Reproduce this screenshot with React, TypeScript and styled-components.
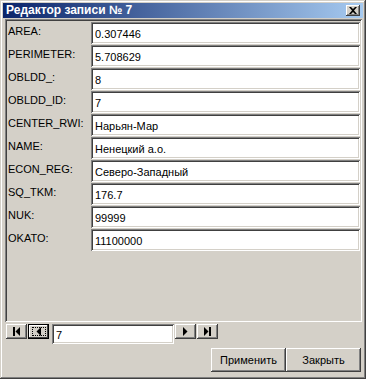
import React from "react";
import styled, { createGlobalStyle } from "styled-components";

const Global = createGlobalStyle`
  html, body { margin: 0; padding: 0; background: #d4d0c8; }
  * { box-sizing: border-box; }
`;

const font = `"Liberation Sans", Arial, sans-serif`;

const Window = styled.div`
  width: 366px;
  height: 379px;
  padding: 3px;
  background: #d4d0c8;
  display: flex;
  flex-direction: column;
  font-family: ${font};
  font-size: 11px;
  color: #000;
  box-shadow: inset -1px -1px #404040, inset 1px 1px #d4d0c8,
    inset -2px -2px #808080, inset 2px 2px #ffffff;
`;

const TitleBar = styled.div`
  height: 15px;
  flex: none;
  display: flex;
  align-items: center;
  padding-left: 3px;
  background: linear-gradient(to right, #0a246a, #a6caf0);
`;

const TitleText = styled.div`
  flex: 1;
  color: #fff;
  font-weight: bold;
  font-size: 12px;
  line-height: 15px;
  white-space: nowrap;
`;

const CloseButton = styled.div`
  width: 14px;
  height: 11px;
  margin-right: 3px;
  display: flex;
  align-items: center;
  justify-content: center;
  background: #d4d0c8;
  box-shadow: inset -1px -1px #404040, inset 1px 1px #ffffff,
    inset -2px -2px #808080;
`;

const Body = styled.div`
  flex: 1;
  display: flex;
  flex-direction: column;
  padding: 1px 1px 3px 2px;
`;

const Panel = styled.div`
  height: 303px;
  flex: none;
  padding: 3px 2px 2px 3px;
  display: flex;
  flex-direction: column;
  gap: 1px;
  box-shadow: inset 1px 1px #808080, inset -1px -1px #ffffff,
    inset 2px 2px #404040, inset -2px -2px #d4d0c8;
`;

const Row = styled.div`
  display: grid;
  grid-template-columns: 83px 1fr;
  height: 22px;
`;

const Label = styled.div`
  padding-top: 3px;
  line-height: 13px;
  white-space: nowrap;
`;

const Field = styled.input`
  height: 22px;
  width: 100%;
  border: none;
  outline: none;
  margin: 0;
  padding: 2px 0 0 4px;
  font-family: ${font};
  font-size: 11px;
  color: #000;
  background: #fff;
  box-shadow: inset 1px 1px #808080, inset -1px -1px #ffffff,
    inset 2px 2px #404040, inset -2px -2px #d4d0c8;
`;

const NavRow = styled.div`
  height: 23px;
  flex: none;
  display: flex;
  align-items: flex-start;
  gap: 1px;
  padding: 1px 0 0 1px;
`;

const NavButton = styled.div<{ $focused?: boolean }>`
  width: 21px;
  height: 15px;
  margin-top: 1px;
  display: flex;
  align-items: center;
  justify-content: center;
  position: relative;
  background: #d4d0c8;
  box-shadow: ${(p) =>
    p.$focused
      ? "inset 0 0 0 1px #000, inset -2px -2px #404040, inset 2px 2px #ffffff"
      : "inset -1px -1px #404040, inset 1px 1px #ffffff, inset -2px -2px #808080, inset 2px 2px #d4d0c8"};
`;

const FocusRect = styled.div`
  position: absolute;
  left: 4px;
  top: 3px;
  right: 3px;
  bottom: 3px;
  border: 1px dotted #000;
`;

const NavField = styled(Field)`
  width: 122px;
  height: 20px;
  margin: 1px 0 0 2px;
  padding-top: 1px;
`;

const ButtonRow = styled.div`
  display: flex;
  justify-content: flex-end;
  margin-top: 3px;
  padding-right: 1px;
`;

const Button = styled.div`
  width: 75px;
  height: 24px;
  display: flex;
  align-items: center;
  justify-content: center;
  font-size: 11px;
  background: #d4d0c8;
  box-shadow: inset -1px -1px #404040, inset 1px 1px #ffffff,
    inset -2px -2px #808080, inset 2px 2px #d4d0c8;
`;

const fields: [string, string][] = [
  ["AREA:", "0.307446"],
  ["PERIMETER:", "5.708629"],
  ["OBLDD_:", "8"],
  ["OBLDD_ID:", "7"],
  ["CENTER_RWI:", "Нарьян-Мар"],
  ["NAME:", "Ненецкий а.о."],
  ["ECON_REG:", "Северо-Западный"],
  ["SQ_TKM:", "176.7"],
  ["NUK:", "99999"],
  ["OKATO:", "11100000"],
];

const First = () => (
  <svg width="7" height="9" viewBox="0 0 7 9">
    <rect x="0" y="0" width="2" height="9" fill="#000" />
    <polygon points="7,0 7,9 2.5,4.5" fill="#000" />
  </svg>
);
const Prev = () => (
  <svg width="5" height="9" viewBox="0 0 5 9">
    <polygon points="5,0 5,9 0.5,4.5" fill="#000" />
  </svg>
);
const Next = () => (
  <svg width="5" height="9" viewBox="0 0 5 9">
    <polygon points="0,0 0,9 4.5,4.5" fill="#000" />
  </svg>
);
const Last = () => (
  <svg width="7" height="9" viewBox="0 0 7 9">
    <polygon points="0,0 0,9 4.5,4.5" fill="#000" />
    <rect x="5" y="0" width="2" height="9" fill="#000" />
  </svg>
);

export default function App() {
  return (
    <>
      <Global />
      <Window>
        <TitleBar>
          <TitleText>Редактор записи № 7</TitleText>
          <CloseButton>
            <svg width="8" height="7" viewBox="0 0 8 7">
              <path d="M0 0h2l2 2 2-2h2L5 3.5 8 7H6L4 5 2 7H0l3-3.5z" fill="#000" />
            </svg>
          </CloseButton>
        </TitleBar>
        <Body>
          <Panel>
            {fields.map(([label, value]) => (
              <Row key={label}>
                <Label>{label}</Label>
                <Field defaultValue={value} />
              </Row>
            ))}
          </Panel>
          <NavRow>
            <NavButton>
              <First />
            </NavButton>
            <NavButton $focused>
              <FocusRect />
              <Prev />
            </NavButton>
            <NavField defaultValue="7" />
            <NavButton>
              <Next />
            </NavButton>
            <NavButton>
              <Last />
            </NavButton>
          </NavRow>
          <ButtonRow>
            <Button>Применить</Button>
            <Button>Закрыть</Button>
          </ButtonRow>
        </Body>
      </Window>
    </>
  );
}
